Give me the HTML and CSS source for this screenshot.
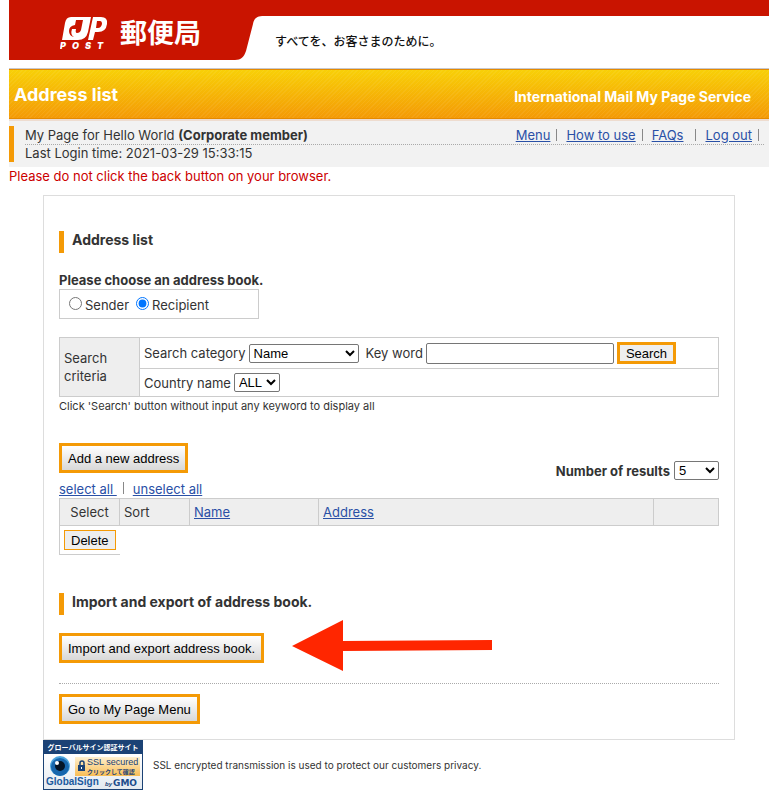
FILE: index.html
```html
<!DOCTYPE html>
<html lang="en">
<head>
<meta charset="utf-8">
<title>Address list - International Mail My Page Service</title>
<link rel="stylesheet" href="styles.css">
</head>
<body>
<header class="masthead">
  <div class="brand">
    <svg class="mark" viewBox="0 0 48 36" aria-label="JP POST">
      <path fill="#fff" d="M11 1H31L28 16Q26 24 18 24H2L5 7Q6 1 11 1Z"/>
      <path fill="#c91400" d="M16 4H23L21 14Q20 17 17 17Q15 17 16 13H12Q10 19 14 21Q9 20 9 15Q9 10 15 9Z"/>
      <path fill="#fff" fill-rule="evenodd" d="M33 1H41Q48 1 47 8Q46 16 38 16H35L33 24H28ZM37 5L36 12H38Q41 12 42 8Q42 5 40 5Z"/>
      <text class="post" y="33" x="0 12 25 37">POST</text>
    </svg>
    <span class="brand-name" lang="ja">郵便局</span>
  </div>
  <svg class="slope" viewBox="0 0 32 60" aria-hidden="true"><path fill="#c91400" d="M0 0H32V16C25 16 22 18 21 24L14 51C12 57 9 60 3 60H0Z"/></svg>
  <p class="tagline" lang="ja">すべてを、お客さまのために。</p>
</header>
<div class="banner">
  <h1>Address list</h1>
  <p>International Mail My Page Service</p>
</div>
<div class="info">
  <div class="info-body">
    <div class="info-row">
      <span>My Page for Hello World <b>(Corporate member)</b></span>
      <nav class="links">
        <a href="#">Menu</a><i></i><a href="#">How to use</a><i></i><a href="#">FAQs</a><i class="wide"></i><a href="#">Log out</a><i></i>
      </nav>
    </div>
    <div class="login">Last Login time: 2021-03-29 15:33:15</div>
  </div>
</div>
<p class="warning">Please do not click the back button on your browser.</p>
<main class="panel">
  <h2>Address list</h2>
  <fieldset class="book">
    <legend>Please choose an address book.</legend>
    <div class="choices">
      <label><input type="radio" name="book">Sender</label>
      <label><input type="radio" name="book" checked>Recipient</label>
    </div>
  </fieldset>
  <table class="criteria">
    <tr>
      <th rowspan="2" scope="rowgroup">Search criteria</th>
      <td>
        <div class="fields">
          <label for="category">Search category</label>
          <select id="category" class="category"><option>Name</option></select>
          <label for="keyword" class="keyword-label">Key word</label>
          <input id="keyword" type="text">
          <button class="btn-search">Search</button>
        </div>
      </td>
    </tr>
    <tr>
      <td>
        <div class="fields">
          <label for="country">Country name</label>
          <select id="country"><option>ALL</option></select>
        </div>
      </td>
    </tr>
  </table>
  <p class="note">Click 'Search' button without input any keyword to display all</p>
  <div class="toolbar">
    <button class="btn">Add a new address</button>
    <div class="results"><label for="count">Number of results</label><select id="count"><option>5</option></select></div>
  </div>
  <div class="selection"><a href="#">select all&nbsp;</a><i></i><a href="#">unselect all</a></div>
  <table class="list">
    <colgroup><col class="c-select"><col class="c-sort"><col class="c-name"><col><col class="c-last"></colgroup>
    <thead>
      <tr><th scope="col" class="center">Select</th><th scope="col">Sort</th><th scope="col"><a href="#">Name</a></th><th scope="col"><a href="#">Address</a></th><th></th></tr>
    </thead>
    <tbody>
      <tr><td><button class="btn-delete">Delete</button></td></tr>
    </tbody>
  </table>
  <h2 class="second">Import and export of address book.</h2>
  <div class="import">
    <button class="btn">Import and export address book.</button>
    <svg class="arrow" viewBox="0 0 200 52" aria-hidden="true"><path fill="#ff2600" d="M0 26L51 0V21L200 20V30L51 31V51Z"/></svg>
  </div>
  <div class="back"><button class="btn">Go to My Page Menu</button></div>
</main>
<footer class="footer">
  <svg class="seal" viewBox="0 0 100 50" role="img" aria-label="GlobalSign SSL secured">
    <defs>
      <linearGradient id="gold" x2="0" y2="1"><stop stop-color="#fff0cf"/><stop offset="1" stop-color="#f8bd55"/></linearGradient>
      <linearGradient id="face" x2="0" y2="1"><stop stop-color="#fff"/><stop offset="1" stop-color="#e4eaf0"/></linearGradient>
    </defs>
    <rect width="100" height="50" fill="#1b4275"/>
    <rect x="1" y="14" width="98" height="35" fill="url(#face)"/>
    <text class="seal-head" x="50" y="10" lang="ja">グローバルサイン認証サイト</text>
    <circle cx="17" cy="26" r="10" fill="#4aa3dc"/>
    <circle cx="17" cy="27" r="9" fill="#1766ad"/>
    <circle cx="17" cy="26" r="5" fill="#041426"/>
    <circle cx="14" cy="23" r="2" fill="#fff"/>
    <rect x="32" y="17" width="65" height="19" fill="url(#gold)"/>
    <path d="M37 25V23Q37 21 39 21Q41 21 41 23V25" fill="none" stroke="#1b4275" stroke-width="1.5"/>
    <rect x="35" y="25" width="7" height="6" fill="#1b4275"/>
    <path d="M38 27H39V29H38Z" fill="#fff"/>
    <text class="seal-ssl" x="44" y="25">SSL secured</text>
    <text class="seal-click" x="44" y="34" lang="ja">クリックして確認</text>
    <text class="seal-name" x="3" y="45">GlobalSign</text>
    <text class="seal-by" x="62" y="46">by</text>
    <text class="seal-gmo" x="70" y="46">GMO</text>
  </svg>
  <p>SSL encrypted transmission is used to protect our customers privacy.</p>
</footer>
</body>
</html>
```
FILE: styles.css
```css
* { box-sizing: border-box; }
body {
  margin: 0 12px 0 9px;
  background: #fff;
  color: #333;
  font: 13px/18px Inter, "Liberation Sans", sans-serif;
}
h1, h2, p { margin: 0; }
a { color: #2a50a6; }
button, select, input { font: 13px "Liberation Sans", Arial, sans-serif; color: #000; margin: 0; }
i { display: inline-block; width: 1px; height: 12px; background: #888; }

.masthead { display: flex; height: 60px; }
.brand { display: flex; gap: 12px; width: 223px; padding: 16px 0 0 51px; background: #c91400; }
.mark { width: 48px; height: 36px; flex: none; }
.post { font: italic 900 9px Inter, sans-serif; fill: #fff; }
.brand-name { color: #fff; font: 700 27px/32px "Noto Sans CJK JP", sans-serif; white-space: nowrap; }
.slope { width: 32px; height: 60px; flex: none; }
.tagline {
  flex: 1;
  border-top: 16px solid #c91400;
  padding: 16px 0 0 11px;
  color: #111;
  font: 500 12px/18px "Noto Sans CJK JP", sans-serif;
}

.banner {
  display: flex;
  justify-content: space-between;
  align-items: center;
  height: 50px;
  margin-top: 9px;
  padding: 2px 18px 0 5px;
  border: solid #e58a00;
  border-width: 1px 0;
  box-shadow: 0 -1px #c8c8cc, 0 2px #eedccf;
  background:
    repeating-linear-gradient(135deg, rgba(255,255,255,.06) 0 1px, transparent 1px 3px),
    linear-gradient(#f8d007, #f49a06);
  color: #fff;
}
.banner h1 { font-size: 18px; line-height: 22px; font-weight: 700; }
.banner p { font-size: 14px; font-weight: 700; padding-top: 4px; }

.info { margin-top: 2px; padding: 5px 5px 5px 0; background: #f2f2f2; }
.info-body { border-left: 5px solid #f49a06; padding-left: 11px; }
.info-row { display: flex; justify-content: space-between; border-bottom: 1px dotted #aaa; }
.login { line-height: 17px; }
.links { display: flex; padding-right: 5px; }
.links i { margin: 3px 9px 0 6px; }
.links .wide { margin-left: 12px; }
.links i:last-child { margin-right: 0; }
.warning { color: #c00; }

.panel { margin: 10px 34px 0; padding: 35px 15px 15px; border: 1px solid #ddd; }
h2 { border-left: 5px solid #f49a06; padding: 0 0 4px 8px; font-size: 14px; line-height: 18px; font-weight: 700; }
.book { margin: 18px 0 0; padding: 0; border: 0; }
.book legend { padding: 0; font-weight: 700; }
.choices { display: flex; gap: 7px; width: 200px; height: 30px; padding: 6px 9px; border: 1px solid #ccc; }
.choices label { display: flex; gap: 3px; }
.choices input { width: 13px; height: 13px; margin-top: 1px; }

table { width: 100%; border-collapse: collapse; table-layout: fixed; }
th { background: #eee; font-weight: 400; text-align: left; }
th, td { border: 1px solid #ccc; padding: 4px; }
.criteria { margin-top: 18px; }
.criteria th { width: 80px; }
.fields { display: flex; align-items: center; gap: 3px; white-space: nowrap; }
select { height: 19px; padding: 0; border: 1px solid #767676; border-radius: 2px; background: #fff; }
.category { width: 110px; }
.keyword-label { margin-left: 4px; }
.fields input { width: 188px; height: 21px; padding: 1px 2px; border: 1px solid #767676; border-radius: 2px; }
.btn-search { height: 22px; padding: 0 6px; border: 3px solid #f49a06; background: #eee; }
.note { font-size: 11px; }

.toolbar { display: flex; justify-content: space-between; align-items: flex-start; margin-top: 28px; }
.btn { height: 30px; padding: 0 6px; border: 3px solid #f49a06; background: linear-gradient(#fff, #d8d8d8); }
.results { display: flex; align-items: center; gap: 4px; padding-top: 18px; font-weight: 700; }
.results select { width: 45px; }
.selection i { margin: 0 9px 0 6px; }
.c-select { width: 60px; }
.c-sort { width: 70px; }
.c-name { width: 129px; }
.c-last { width: 65px; }
.list .center { text-align: center; }
.list td { border-right: 0; padding: 4px; }
.btn-delete { display: block; height: 20px; padding: 0 6px; border: 1px solid #f49a06; background: #eee; }

.second { margin-top: 38px; }
.import { position: relative; margin-top: 18px; }
.import .btn { display: block; }
.arrow { position: absolute; left: 233px; top: -13px; width: 200px; height: 52px; }
.back { margin-top: 20px; padding-top: 10px; border-top: 1px dotted #aaa; }
.back .btn { display: block; }

.footer { display: flex; align-items: center; gap: 10px; margin: 0 34px; font-size: 10px; }
.seal { width: 100px; height: 50px; flex: none; }
.seal-head { font: 700 7px "Noto Sans CJK JP", sans-serif; fill: #fff; text-anchor: middle; }
.seal-ssl { font: 9px "Liberation Sans", sans-serif; fill: #1b4275; }
.seal-click { font: 700 6px "Noto Sans CJK JP", sans-serif; fill: #1b4275; }
.seal-name { font: 700 10px "Liberation Sans", sans-serif; fill: #1c5a9e; }
.seal-by { font: italic 700 6px "Liberation Sans", sans-serif; fill: #1b4275; }
.seal-gmo { font: 700 9px "DejaVu Sans", sans-serif; fill: #1b4c8c; }
```
